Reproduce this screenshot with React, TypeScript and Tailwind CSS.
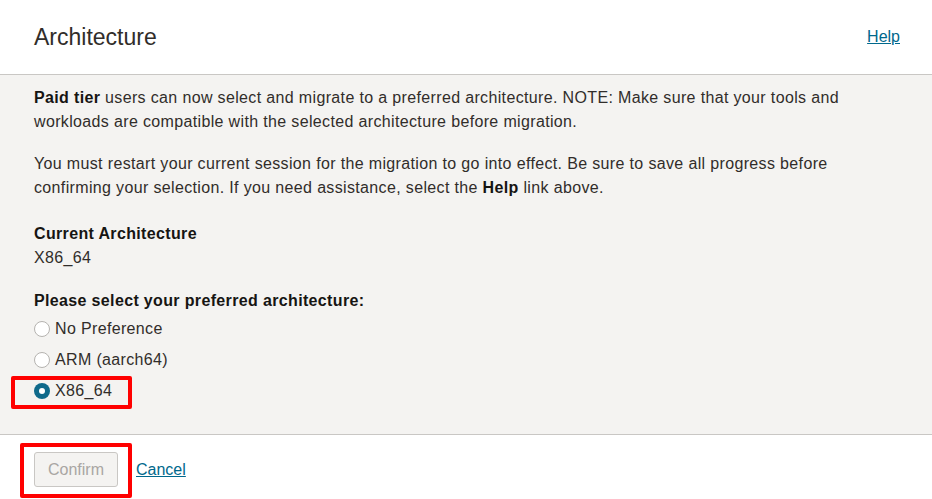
import { useState } from 'react';

const options = [
  { id: 'none', label: 'No Preference' },
  { id: 'arm', label: 'ARM (aarch64)' },
  { id: 'x86', label: 'X86_64' },
];

function Radio({ checked }: { checked: boolean }) {
  return checked ? (
    <span className="w-4 h-4 rounded-full bg-[#0f6a8b] flex items-center justify-center shrink-0">
      <span className="w-[6px] h-[6px] rounded-full bg-white" />
    </span>
  ) : (
    <span className="w-4 h-4 rounded-full border border-[#b5b3b0] bg-white shrink-0" />
  );
}

export default function App() {
  const [selected, setSelected] = useState('x86');

  return (
    <div
      className="w-[932px] h-[499px] bg-white text-[#161513] relative overflow-hidden"
      style={{ fontFamily: '"Liberation Sans", Arial, sans-serif' }}
    >
      {/* Header */}
      <div className="h-[75px] flex items-center justify-between pl-[34px] pr-[32px] border-b border-[#c9c7c4]">
        <h1 className="text-[23px] text-[#312d2a] font-normal">Architecture</h1>
        <a href="#" className="text-[16px] text-[#00688c] underline">Help</a>
      </div>

      {/* Body */}
      <div className="h-[360px] bg-[#f4f3f1] px-[34px] pt-[11px] border-b border-[#c9c7c4] text-[16px] leading-[24px] text-[#312d2a] tracking-[0.35px]">
        <p className="max-w-[840px]">
          <b className="text-[#161513]">Paid tier</b> users can now select and migrate to a preferred architecture. NOTE: Make sure that your tools and workloads are compatible with the selected architecture before migration.
        </p>
        <p className="mt-[18px] max-w-[840px]">
          You must restart your current session for the migration to go into effect. Be sure to save all progress before confirming your selection. If you need assistance, select the <b className="text-[#161513]">Help</b> link above.
        </p>
        <div className="mt-[22px]">
          <div className="font-bold text-[#161513]">Current Architecture</div>
          <div>X86_64</div>
        </div>
        <div className="mt-[19px]">
          <div className="font-bold text-[#161513]">Please select your preferred architecture:</div>
          <div className="flex flex-col">
            {options.map((o) => (
              <label
                key={o.id}
                className="flex items-center gap-[5px] h-[31px] cursor-pointer"
                onClick={() => setSelected(o.id)}
              >
                <Radio checked={selected === o.id} />
                <span>{o.label}</span>
              </label>
            ))}
          </div>
        </div>
      </div>

      {/* Footer */}
      <div className="flex items-center gap-[18px] px-[34px] pt-[17px]">
        <button
          disabled
          className="h-[35px] px-[13px] border border-[#c9c7c4] rounded-[3px] bg-[#f4f3f1] text-[#a9a6a3] text-[16px]"
        >
          Confirm
        </button>
        <a href="#" className="text-[16px] text-[#00688c] underline">Cancel</a>
      </div>

      {/* Annotation boxes */}
      <div className="absolute left-[11px] top-[376px] w-[121px] h-[33px] border-4 border-[#ff0000] rounded-[2px] pointer-events-none" />
      <div className="absolute left-[20px] top-[443px] w-[112px] h-[55px] border-4 border-[#ff0000] rounded-[2px] pointer-events-none" />
    </div>
  );
}
